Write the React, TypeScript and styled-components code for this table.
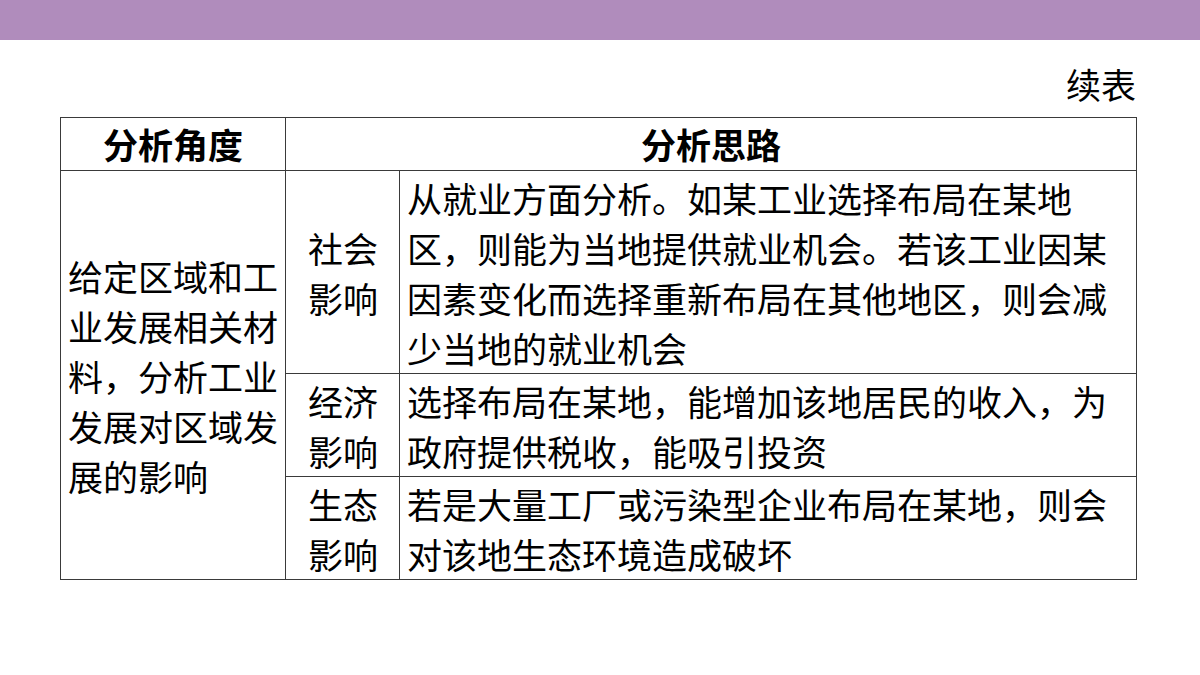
import React from "react";
import styled, { createGlobalStyle } from "styled-components";

const Global = createGlobalStyle`
  html, body { margin: 0; padding: 0; background: #ffffff; }
  body { font-family: "Noto Sans CJK SC", "Noto Sans", sans-serif; color: #000; }
`;

const Page = styled.div`
  width: 1200px;
  height: 675px;
  overflow: hidden;
  background: #ffffff;
`;

const TopBar = styled.div`
  height: 40px;
  background: #b08cbc;
`;

const Content = styled.div`
  padding: 19px 64px 0 60px;
  display: flex;
  flex-direction: column;
`;

const Note = styled.div`
  font-size: 35px;
  line-height: 50px;
  text-align: right;
  margin-bottom: 8px;
`;

const Table = styled.table`
  border-collapse: collapse;
  width: 1076px;
  table-layout: fixed;
  font-size: 35px;
  line-height: 50px;
`;

const HeadCell = styled.th`
  border: 1px solid #3a3a3a;
  font-weight: 700;
  text-align: center;
  height: 52px;
  padding: 0;
  vertical-align: middle;
`;

const Cell = styled.td<{ $align?: "left" | "center" }>`
  border: 1px solid #3a3a3a;
  padding: 2px 6px 0 7px;
  text-align: ${(p) => p.$align ?? "left"};
  vertical-align: middle;
  font-weight: 400;
`;

const rows = [
  {
    label: "社会影响",
    text: "从就业方面分析。如某工业选择布局在某地区，则能为当地提供就业机会。若该工业因某因素变化而选择重新布局在其他地区，则会减少当地的就业机会",
  },
  {
    label: "经济影响",
    text: "选择布局在某地，能增加该地居民的收入，为政府提供税收，能吸引投资",
  },
  {
    label: "生态影响",
    text: "若是大量工厂或污染型企业布局在某地，则会对该地生态环境造成破坏",
  },
];

export default function App() {
  return (
    <Page>
      <Global />
      <TopBar />
      <Content>
        <Note>续表</Note>
        <Table>
          <colgroup>
            <col style={{ width: 225 }} />
            <col style={{ width: 114 }} />
            <col style={{ width: 737 }} />
          </colgroup>
          <thead>
            <tr>
              <HeadCell>分析角度</HeadCell>
              <HeadCell colSpan={2}>分析思路</HeadCell>
            </tr>
          </thead>
          <tbody>
            {rows.map((r, i) => (
              <tr key={r.label}>
                {i === 0 && (
                  <Cell rowSpan={3}>给定区域和工业发展相关材料，分析工业发展对区域发展的影响</Cell>
                )}
                <Cell $align="center">
                  {r.label.slice(0, 2)}
                  <br />
                  {r.label.slice(2)}
                </Cell>
                <Cell>{r.text}</Cell>
              </tr>
            ))}
          </tbody>
        </Table>
      </Content>
    </Page>
  );
}
